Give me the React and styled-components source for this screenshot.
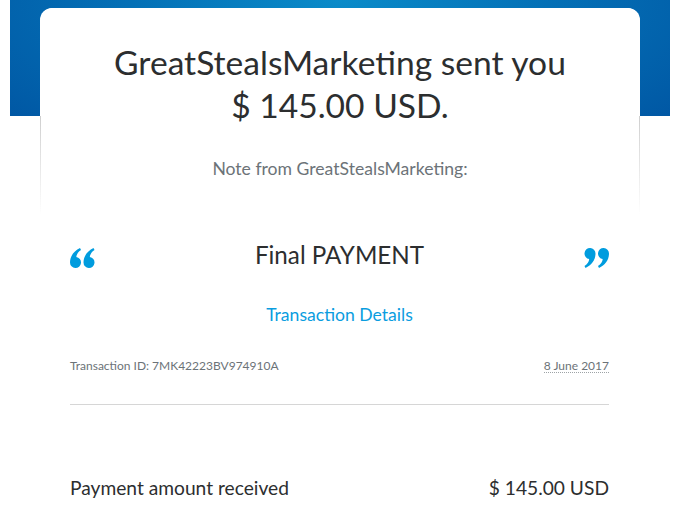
import React from "react";
import styled, { createGlobalStyle } from "styled-components";

const Global = createGlobalStyle`
  html, body { margin: 0; padding: 0; background: #fff; }
  body { font-family: Lato, "Open Sans", "Liberation Sans", sans-serif; color: #2c2e2f; }
`;

const Page = styled.div`
  width: 660px;
  margin-left: 10px;
  padding: 8px 30px 0;
  box-sizing: border-box;
  background-image: radial-gradient(ellipse 70% 160% at 50% 0%, #0a8bc9 0%, #0470b6 45%, #0055a2 100%);
  background-repeat: no-repeat;
  background-size: 100% 116px;
`;

const Card = styled.div`
  background: #fff;
  border-radius: 12px 12px 0 0;
`;

const Hero = styled.div`
  padding: 33px 30px 0;
  height: 207px;
  box-sizing: border-box;
  border: 1px solid transparent;
  border-top: 0;
  border-bottom: 0;
  border-radius: 12px 12px 0 0;
  background:
    linear-gradient(#fff, #fff) padding-box,
    linear-gradient(to bottom, transparent 0, transparent 108px, #cfcfcf 108px, rgba(207,207,207,0) 100%) border-box;
  text-align: center;
`;

const Title = styled.h1`
  margin: 0;
  font-weight: 400;
  font-size: 33.6px;
  line-height: 43px;
  color: #2c2e2f;
`;

const Note = styled.p`
  margin: 31px 0 0;
  font-size: 17.6px;
  line-height: 22px;
  color: #6c7378;
`;

const Body = styled.div`
  padding: 0 31px 0 30px;
`;

const QuoteRow = styled.div`
  display: flex;
  align-items: center;
  justify-content: space-between;
  height: 40px;
  margin-top: 20px;
`;

const QuoteIcon = styled.svg`
  width: 25px;
  height: 20px;
  margin-top: 6px;
  fill: #009cde;
  transform: ${p => (p.$close ? "rotate(180deg)" : "none")};
  flex: none;
`;

const Message = styled.div`
  font-size: 24.2px;
  line-height: 30px;
  color: #2c2e2f;
`;

const DetailsLink = styled.a`
  display: block;
  text-align: center;
  margin-top: 29px;
  font-size: 17.6px;
  line-height: 22px;
  color: #0a9ddf;
  text-decoration: none;
`;

const MetaRow = styled.div`
  display: flex;
  justify-content: space-between;
  align-items: center;
  margin-top: 33px;
  font-size: 12px;
  line-height: 14px;
  color: #6c7378;
`;

const DateText = styled.span`
  border-bottom: 1px dotted #9da3a6;
  line-height: 13px;
`;

const Divider = styled.hr`
  border: 0;
  border-top: 1px solid #d6d6d6;
  margin: 31px 0 0;
`;

const AmountRow = styled.div`
  display: flex;
  justify-content: space-between;
  align-items: center;
  margin-top: 71px;
  font-size: 19.2px;
  line-height: 24px;
  color: #2c2e2f;
`;

const MARK = "M0 14.5 C0 8 4 3 10 0 L11 2 C8 4 6.5 6.5 6.3 9.05 A5.5 5.5 0 1 1 0 14.5 Z";

function Quote({ close }) {
  return (
    <QuoteIcon $close={close} viewBox="0 0 25 20" aria-hidden="true">
      <path d={MARK} />
      <path d={MARK} transform="translate(13.5 0)" />
    </QuoteIcon>
  );
}

export default function App() {
  return (
    <>
      <Global />
      <Page>
        <Card>
          <Hero>
            <Title>
              GreatStealsMarketing sent you
              <br />$ 145.00 USD.
            </Title>
            <Note>Note from GreatStealsMarketing:</Note>
          </Hero>
          <Body>
            <QuoteRow>
              <Quote />
              <Message>Final PAYMENT</Message>
              <Quote close />
            </QuoteRow>
            <DetailsLink href="#">Transaction Details</DetailsLink>
            <MetaRow>
              <span>Transaction ID: 7MK42223BV974910A</span>
              <DateText>8 June 2017</DateText>
            </MetaRow>
            <Divider />
            <AmountRow>
              <span>Payment amount received</span>
              <span>$ 145.00 USD</span>
            </AmountRow>
          </Body>
        </Card>
      </Page>
    </>
  );
}
